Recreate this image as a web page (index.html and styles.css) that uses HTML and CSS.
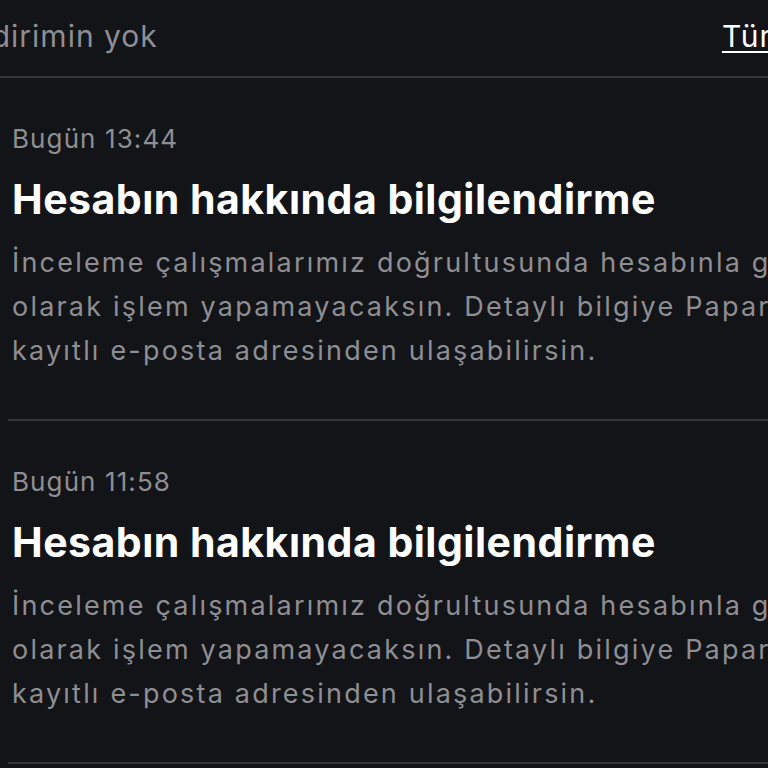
FILE: index.html
```html
<!DOCTYPE html>
<html lang="tr">
<head>
    <meta charset="UTF-8">
    <meta name="viewport" content="width=device-width, initial-scale=1.0">
    <title>Bildirimler</title>
    <link rel="stylesheet" href="styles.css">
</head>
<body>
    <header class="filter-bar">
        <span class="filter-label">Okunmamış bildirimin yok</span>
        <a href="#" class="filter-link">Tümünü okundu say</a>
    </header>

    <ul class="notice-list">
        <li class="notice">
            <p class="notice-time">Bugün 13:44</p>
            <h2 class="notice-title">Hesabın hakkında bilgilendirme</h2>
            <p class="notice-body">İnceleme çalışmalarımız doğrultusunda hesabınla geçici olarak<br>olarak işlem yapamayacaksın. Detaylı bilgiye Papara hesabına<br>kayıtlı e-posta adresinden ulaşabilirsin.</p>
        </li>
        <li class="notice">
            <p class="notice-time">Bugün 11:58</p>
            <h2 class="notice-title">Hesabın hakkında bilgilendirme</h2>
            <p class="notice-body">İnceleme çalışmalarımız doğrultusunda hesabınla geçici olarak<br>olarak işlem yapamayacaksın. Detaylı bilgiye Papara hesabına<br>kayıtlı e-posta adresinden ulaşabilirsin.</p>
        </li>
    </ul>
</body>
</html>
```

FILE: styles.css
```css
:root {
    --bg: #131418;
    --text: #ffffff;
    --muted: #8e8e93;
    --line: #35363a;
}

* {
    margin: 0;
    padding: 0;
    box-sizing: border-box;
}

body {
    font-family: Inter, 'Noto Sans', sans-serif;
    background-color: var(--bg);
    color: var(--text);
    overflow: hidden;
    white-space: nowrap;
}

/* the bar is wider than the visible frame, both ends are cut */
.filter-bar {
    display: flex;
    justify-content: space-between;
    align-items: center;
    height: 78px;
    padding-bottom: 4px;
    border-bottom: 2px solid var(--line);
}

.filter-label {
    font-size: 30px;
    letter-spacing: 1px;
    color: var(--muted);
    margin-left: -230px;
}

.filter-link {
    font-size: 30px;
    letter-spacing: 1px;
    color: var(--text);
    text-decoration: underline;
    text-decoration-thickness: 2px;
    text-underline-offset: 4px;
    margin-right: -258px;
}

.notice-list {
    list-style: none;
    padding-left: 8px;
}

.notice {
    padding: 45px 0 46px 4px;
    border-bottom: 2px solid var(--line);
}

.notice-time {
    font-size: 26px;
    line-height: 32px;
    letter-spacing: 1.1px;
    color: var(--muted);
}

.notice-title {
    margin-top: 20px;
    font-size: 41px;
    line-height: 48px;
    font-weight: 700;
    letter-spacing: 0.5px;
}

.notice-body {
    margin-top: 18px;
    font-size: 27px;
    line-height: 44px;
    letter-spacing: 2.2px;
    color: var(--muted);
}
```
